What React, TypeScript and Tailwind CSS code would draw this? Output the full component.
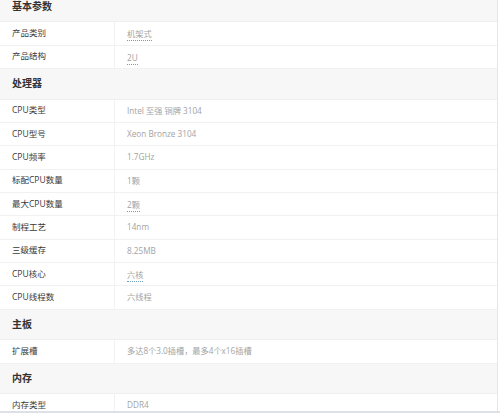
type Row = { label: string; value: string; dotted?: boolean };
type Section = { title: string; rows: Row[] };

const SECTIONS: Section[] = [
  {
    title: "基本参数",
    rows: [
      { label: "产品类别", value: "机架式", dotted: true },
      { label: "产品结构", value: "2U", dotted: true },
    ],
  },
  {
    title: "处理器",
    rows: [
      { label: "CPU类型", value: "Intel 至强 铜牌 3104" },
      { label: "CPU型号", value: "Xeon Bronze 3104" },
      { label: "CPU频率", value: "1.7GHz" },
      { label: "标配CPU数量", value: "1颗" },
      { label: "最大CPU数量", value: "2颗", dotted: true },
      { label: "制程工艺", value: "14nm" },
      { label: "三级缓存", value: "8.25MB" },
      { label: "CPU核心", value: "六核", dotted: true },
      { label: "CPU线程数", value: "六线程" },
    ],
  },
  {
    title: "主板",
    rows: [{ label: "扩展槽", value: "多达8个3.0插槽，最多4个x16插槽" }],
  },
  {
    title: "内存",
    rows: [{ label: "内存类型", value: "DDR4" }],
  },
];

export default function App() {
  return (
    <div
      className="relative w-[500px] h-[413px] overflow-hidden bg-white"
      style={{ fontFamily: '"Open Sans", "Noto Sans CJK SC", sans-serif' }}
    >
      <div className="w-[498px] -mt-[8.33px] border-r border-[#e6e6e6]">
        {SECTIONS.map((section) => (
          <div key={section.title}>
            {/* section header */}
            <div className="h-[30.67px] flex items-center pl-[12px] bg-[#f7f7f7] border-b border-[#efefef] text-[10px] font-bold text-[#333]">
              {section.title}
            </div>
            {section.rows.map((row) => (
              <div
                key={row.label}
                className="h-[23.33px] flex items-stretch bg-white border-b border-[#f1f1f1] text-[8.5px]"
              >
                <div className="w-[115px] shrink-0 flex items-center pl-[12px] border-r border-[#f2f2f2] text-[#3a3a3a]">
                  {row.label}
                </div>
                <div className="flex items-center pl-[12px] text-[#a3a3a3] text-[8.2px]">
                  {row.dotted ? (
                    <span className="border-b border-dotted border-[#6f9fba] leading-[11px] pb-[1px] mt-[3px]">
                      {row.value}
                    </span>
                  ) : (
                    row.value
                  )}
                </div>
              </div>
            ))}
          </div>
        ))}
      </div>
      <div className="absolute left-0 right-0 bottom-0 h-[2px] bg-[#dde0e6]" />
    </div>
  );
}
